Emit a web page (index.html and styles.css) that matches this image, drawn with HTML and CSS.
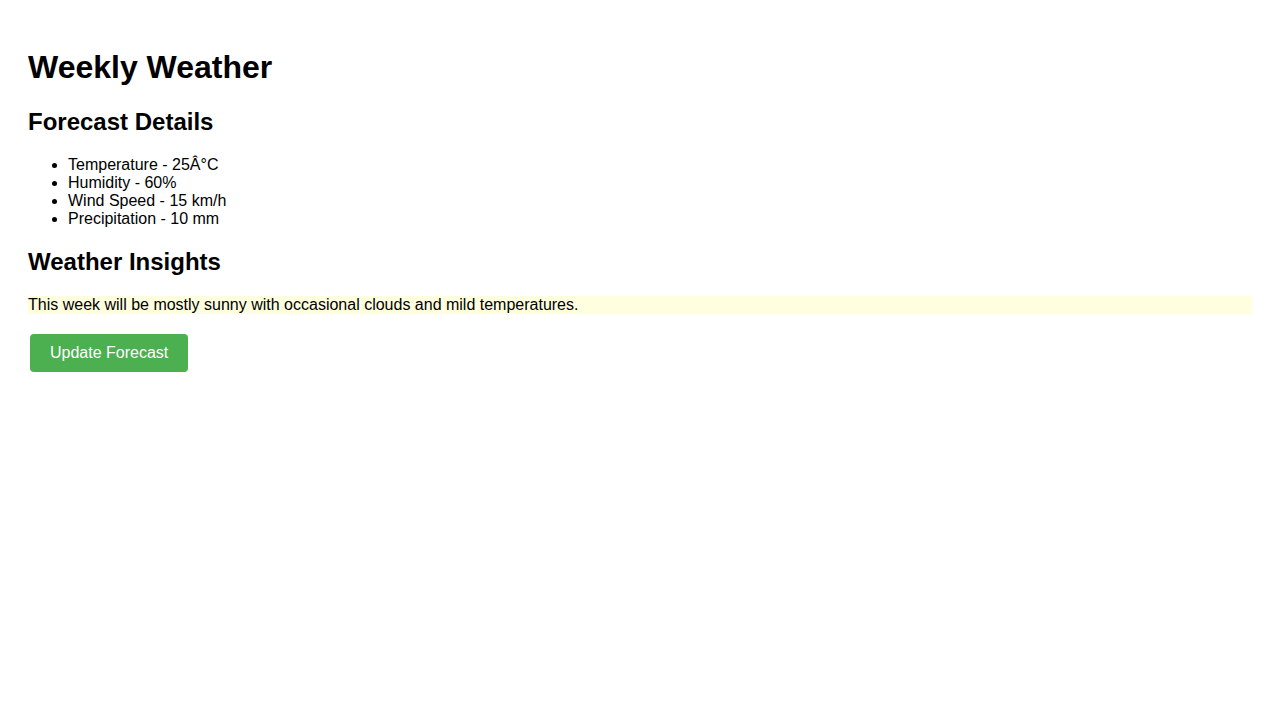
FILE: index.html
```html
<!DOCTYPE html>
<html lang="en">
<head>
<meta charset="utf-8">
<title>Weekly Weather</title>
<link rel="stylesheet" href="styles.css">
</head>
<body>
<h1 class="title">Weekly Weather</h1>
<h2 class="section-title">Forecast Details</h2>
<ul class="details">
<li>Temperature - 25Â°C</li>
<li>Humidity - 60%</li>
<li>Wind Speed - 15 km/h</li>
<li>Precipitation - 10 mm</li>
</ul>
<h2 class="section-title">Weather Insights</h2>
<p class="insight">This week will be mostly sunny with occasional clouds and mild temperatures.</p>
<button class="update-btn" type="button">Update Forecast</button>
</body>
</html>
```
FILE: styles.css
```css
body {
  margin: 8px;
  padding: 20px;
  font-family: "Liberation Sans", Arial, sans-serif;
  color: #000;
  background: #fff;
}
.title {
  font-size: 32px;
  margin: 21.44px 0;
}
.section-title {
  font-size: 24px;
  margin: 19.92px 0;
}
.details {
  margin: 16px 0;
  padding-left: 40px;
}
.insight {
  background: #ffffe0;
  margin: 16px 0;
}
.update-btn {
  display: inline-block;
  margin: 4px 2px;
  padding: 10px 20px;
  font-family: "Liberation Sans", Arial, sans-serif;
  font-size: 16px;
  color: #fff;
  background: #4caf50;
  border: none;
  border-radius: 4px;
  cursor: pointer;
}
```
